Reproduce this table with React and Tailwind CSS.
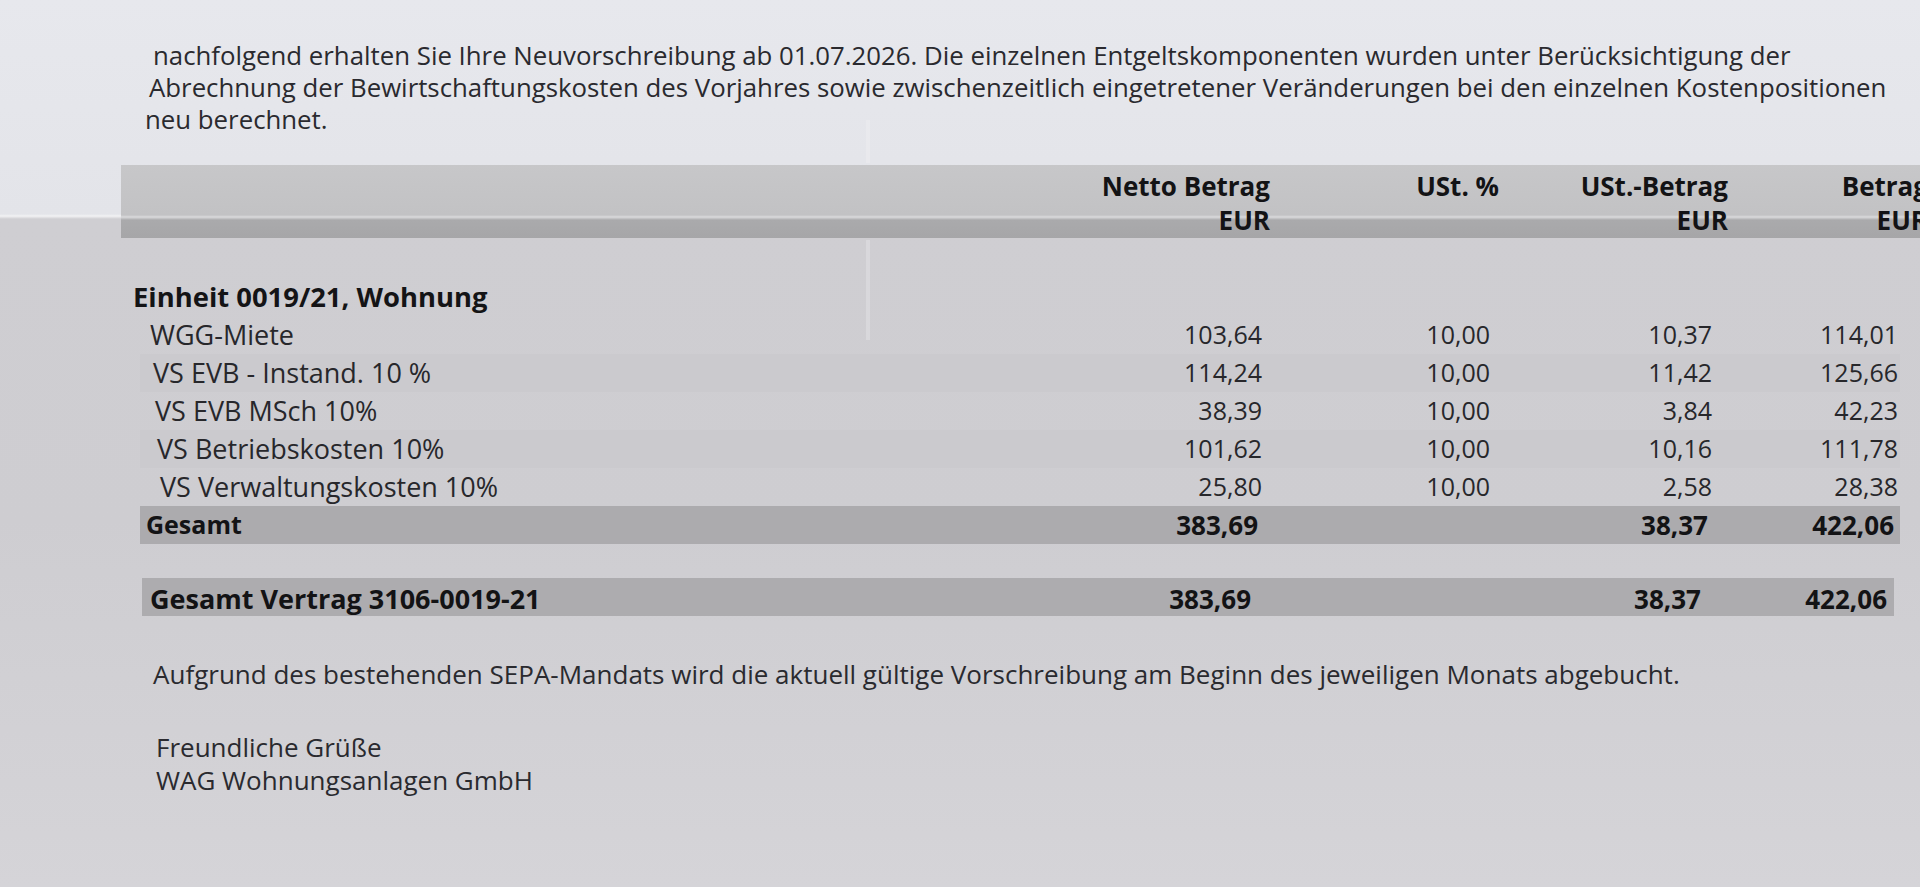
export default function App() {
  const rows = [
    { label: "WGG-Miete", n: "103,64", p: "10,00", u: "10,37", b: "114,01", pl: "pl-[10px]", stripe: false },
    { label: "VS EVB - Instand. 10 %", n: "114,24", p: "10,00", u: "11,42", b: "125,66", pl: "pl-[13px]", stripe: true },
    { label: "VS EVB MSch 10%", n: "38,39", p: "10,00", u: "3,84", b: "42,23", pl: "pl-[15px]", stripe: false },
    { label: "VS Betriebskosten 10%", n: "101,62", p: "10,00", u: "10,16", b: "111,78", pl: "pl-[17px]", stripe: true },
    { label: "VS Verwaltungskosten 10%", n: "25,80", p: "10,00", u: "2,58", b: "28,38", pl: "pl-[20px]", stripe: false },
  ];

  return (
    <div className="relative w-[1920px] h-[887px] overflow-hidden font-['Open_Sans','Noto_Sans',sans-serif] bg-[linear-gradient(180deg,#e7e8ed_0px,#e3e4e9_214px,#f2f2f4_216px,#cfced2_219px,#cecdd1_520px,#d5d4d8_887px)]">
      {/* creases */}
      <div className="absolute left-[866px] top-[120px] h-[43px] w-[4px] bg-[rgba(255,255,255,0.18)]" />
      <div className="absolute left-[866px] top-[240px] h-[100px] w-[4px] bg-[rgba(255,255,255,0.22)]" />

      {/* Intro paragraph */}
      <div className="pt-[39px] text-[25.8px] leading-[32px] text-[#2a2a2f] whitespace-nowrap">
        <div className="ml-[153px]">
          nachfolgend erhalten Sie Ihre Neuvorschreibung ab 01.07.2026. Die einzelnen Entgeltskomponenten wurden unter Berücksichtigung der
        </div>
        <div className="ml-[149px]">
          Abrechnung der Bewirtschaftungskosten des Vorjahres sowie zwischenzeitlich eingetretener Veränderungen bei den einzelnen Kostenpositionen
        </div>
        <div className="ml-[145px]">neu berechnet.</div>
      </div>

      {/* Table header band */}
      <div className="mt-[30px] ml-[121px] w-[1815px] h-[73px] bg-[linear-gradient(180deg,#c7c7c9_0px,#c2c2c4_50px,#dadadc_52px,#aaaaac_55px,#a6a6a8_73px)]">
        <div className="flex pt-[4px] pr-[8px] text-[26px] leading-[34px] font-bold text-[#131315] whitespace-nowrap">
          <div className="flex-1" />
          <div className="w-[300px] text-right">
            <div>Netto Betrag</div>
            <div>EUR</div>
          </div>
          <div className="w-[229px] text-right">
            <div>USt. %</div>
            <div>&nbsp;</div>
          </div>
          <div className="w-[229px] text-right">
            <div>USt.-Betrag</div>
            <div>EUR</div>
          </div>
          <div className="w-[200px] text-right">
            <div>Betrag</div>
            <div>EUR</div>
          </div>
        </div>
      </div>

      {/* Section title */}
      <div className="mt-[40px] ml-[133px] h-[38px] flex items-center text-[27.4px] font-bold text-[#141416] whitespace-nowrap">
        Einheit 0019/21, Wohnung
      </div>

      {/* Rows */}
      <div className="text-[25px] text-[#27272b] whitespace-nowrap">
        {rows.map((r) => (
          <div
            key={r.label}
            className={
              r.stripe
                ? "ml-[140px] w-[1760px] h-[38px] flex items-center pr-[2px] bg-[#cbcace]"
                : "ml-[140px] w-[1760px] h-[38px] flex items-center pr-[2px]"
            }
          >
            <div className={"flex-1 text-[27px] " + r.pl}>{r.label}</div>
            <div className="w-[300px] text-right">{r.n}</div>
            <div className="w-[228px] text-right">{r.p}</div>
            <div className="w-[222px] text-right">{r.u}</div>
            <div className="w-[186px] text-right">{r.b}</div>
          </div>
        ))}

        {/* Gesamt */}
        <div className="ml-[140px] w-[1760px] h-[38px] flex items-center pr-[6px] bg-[#acabae] font-bold text-[26px] text-[#131315]">
          <div className="flex-1 pl-[6px] text-[25px]">Gesamt</div>
          <div className="w-[300px] text-right">383,69</div>
          <div className="w-[228px] text-right"></div>
          <div className="w-[222px] text-right">38,37</div>
          <div className="w-[186px] text-right">422,06</div>
        </div>

        {/* Gesamt Vertrag */}
        <div className="mt-[34px] ml-[142px] w-[1752px] h-[38px] flex items-center pt-[4px] pr-[7px] bg-[#adacaf] font-bold text-[26px] text-[#131315]">
          <div className="flex-1 pl-[8px] text-[27px]">Gesamt Vertrag 3106-0019-21</div>
          <div className="w-[300px] text-right">383,69</div>
          <div className="w-[228px] text-right"></div>
          <div className="w-[222px] text-right">38,37</div>
          <div className="w-[186px] text-right">422,06</div>
        </div>
      </div>

      {/* Footer text */}
      <div className="mt-[42px] ml-[153px] text-[26px] leading-[32px] text-[#2a2a2f] whitespace-nowrap">
        Aufgrund des bestehenden SEPA-Mandats wird die aktuell gültige Vorschreibung am Beginn des jeweiligen Monats abgebucht.
      </div>
      <div className="mt-[41px] ml-[156px] text-[26px] leading-[33px] text-[#2a2a2f] whitespace-nowrap">
        <div>Freundliche Grüße</div>
        <div>WAG Wohnungsanlagen GmbH</div>
      </div>
    </div>
  );
}
